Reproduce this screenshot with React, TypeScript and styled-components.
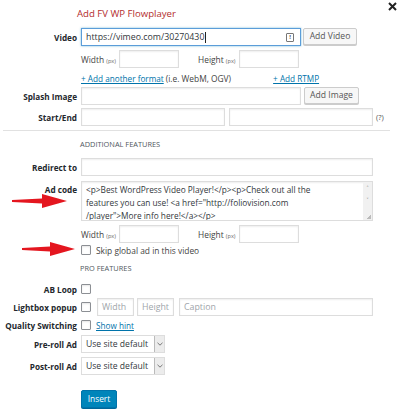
import React from 'react'
import styled, { createGlobalStyle } from 'styled-components'

const Global = createGlobalStyle`
    html, body {
        margin: 0;
        padding: 0;
        background: #fff;
    }
    body {
        font-family: "Open Sans", "Noto Sans", sans-serif;
        color: #444;
    }
`

const Dialog = styled.div`
    position: relative;
    width: 400px;
    height: 414px;
    background: #fff;
    overflow: hidden;
`

const Close = styled.button`
    position: absolute;
    top: 1px;
    right: 2px;
    width: 10px;
    height: 10px;
    padding: 0;
    border: 0;
    background: none;
    >svg{
        display: block;
    }
`

const Title = styled.h2`
    margin: 0;
    height: 28px;
    line-height: 28px;
    padding-left: 77px;
    font-size: 9.6px;
    font-weight: 400;
    color: #b32d2e;
`

const Row = styled.div<{ $top?: number, $h?: number }>`
    display: flex;
    align-items: center;
    margin-top: ${p => p.$top || 0}px;
    height: ${p => p.$h || 18}px;
    position: relative;
`

const Label = styled.div<{ $top?: boolean }>`
    width: 81px;
    flex-shrink: 0;
    box-sizing: border-box;
    padding-right: 4px;
    text-align: right;
    white-space: nowrap;
    font-size: 8.2px;
    font-weight: 700;
    color: #23282d;
    align-self: ${p => p.$top ? 'flex-start' : 'center'};
    padding-top: ${p => p.$top ? '3px' : '0'};
`

const Field = styled.div<{ $w: number, $ml?: number, $focus?: boolean, $h?: number }>`
    box-sizing: border-box;
    width: ${p => p.$w}px;
    height: ${p => p.$h || 18}px;
    margin-left: ${p => p.$ml || 0}px;
    border: 1px solid ${p => p.$focus ? '#5b9dd9' : '#ddd'};
    box-shadow: ${p => p.$focus ? '0 0 2px rgba(30,140,190,.6)' : 'inset 0 1px 2px rgba(0,0,0,.07)'};
    background: #fff;
    display: flex;
    align-items: center;
    padding: 0 4px;
    font-size: 8.8px;
    color: #32373c;
    white-space: nowrap;
    position: relative;
`

const Placeholder = styled.span`
    color: #a0a5aa;
`

const Caret = styled.span`
    display: inline-block;
    width: 1px;
    height: 11px;
    background: #222;
    margin-left: 1px;
`

const WarnIcon = styled.span`
    position: absolute;
    right: 6px;
    top: 4px;
    width: 6px;
    height: 7px;
    border: 1px solid #777;
    border-radius: 1px;
    font-size: 6px;
    line-height: 7px;
    text-align: center;
    font-weight: 700;
    color: #555;
`

const Button = styled.div<{ $w: number, $ml?: number }>`
    box-sizing: border-box;
    width: ${p => p.$w}px;
    height: 17px;
    margin-left: ${p => p.$ml || 0}px;
    border: 1px solid #ccc;
    border-radius: 2px;
    background: #f7f7f7;
    box-shadow: 0 1px 0 #ccc;
    font-size: 8.6px;
    line-height: 15px;
    text-align: center;
    color: #555;
    align-self: flex-start;
`

const Primary = styled.div`
    box-sizing: border-box;
    width: 36px;
    height: 18px;
    border: 1px solid #0073aa;
    border-radius: 2px;
    background: #0085ba;
    box-shadow: 0 1px 0 #006799;
    color: #fff;
    font-size: 8.4px;
    line-height: 16px;
    text-align: center;
`

const Small = styled.span<{ $w?: number, $ml?: number }>`
    display: inline-block;
    width: ${p => p.$w ? p.$w + 'px' : 'auto'};
    margin-left: ${p => p.$ml || 0}px;
    font-size: 8.4px;
    color: #444;
    white-space: nowrap;
    >small{
        font-size: 5.6px;
        color: #666;
    }
`

const Link = styled.a<{ $ml?: number }>`
    margin-left: ${p => p.$ml || 0}px;
    color: #0073aa;
    text-decoration: underline;
    font-size: 8.2px;
    white-space: nowrap;
`

const Hint = styled.span`
    margin-left: 3px;
    font-size: 7.6px;
    color: #555;
`

const Separator = styled.hr`
    margin: 4px 10px 0 3px;
    border: 0;
    border-top: 1px solid #e1e1e1;
    height: 0;
`

const Section = styled.div<{ $top: number }>`
    margin-top: ${p => p.$top}px;
    padding-left: 80px;
    height: 12px;
    line-height: 12px;
    font-size: 7.4px;
    text-transform: uppercase;
    color: #50575e;
`

const AreaBox = styled.div`
    box-sizing: border-box;
    width: 292px;
    height: 40px;
    border: 1px solid #ddd;
    box-shadow: inset 0 1px 2px rgba(0,0,0,.07);
    display: flex;
    background: #fff;
`

const AreaText = styled.div`
    flex: 1;
    padding: 1px 4px;
    font-size: 8.3px;
    line-height: 13px;
    color: #32373c;
    white-space: pre;
    overflow: hidden;
`

const ScrollCol = styled.div`
    width: 9px;
    background: #f1f1f1;
    position: relative;
    display: flex;
    flex-direction: column;
    align-items: center;
    font-size: 6px;
    color: #555;
    >span{
        height: 12px;
        line-height: 12px;
    }
    >i{
        position: absolute;
        right: 1px;
        bottom: 1px;
        width: 4px;
        height: 4px;
        background: linear-gradient(135deg, transparent 50%, #bbb 50%);
    }
`

const Check = styled.span`
    box-sizing: border-box;
    display: inline-block;
    width: 10px;
    height: 10px;
    border: 1px solid #8c8f94;
    border-radius: 1px;
    background: #fff;
    box-shadow: inset 0 1px 2px rgba(0,0,0,.1);
    flex-shrink: 0;
`

const CheckText = styled.span`
    margin-left: 5px;
    font-size: 8.4px;
    color: #444;
`

const Select = styled.div`
    box-sizing: border-box;
    width: 84px;
    height: 18px;
    border: 1px solid #ddd;
    display: flex;
    background: #fff;
    >span{
        flex: 1;
        padding-left: 4px;
        font-size: 8.6px;
        line-height: 16px;
        color: #32373c;
        white-space: nowrap;
    }
    >b{
        width: 9px;
        border-left: 1px solid #bbb;
        background: #ececec;
        display: flex;
        align-items: center;
        justify-content: center;
    }
`

const Arrow = styled.svg<{ $left: number, $top: number }>`
    position: absolute;
    left: ${p => p.$left}px;
    top: ${p => p.$top}px;
`

function RedArrow(props: { left: number, top: number, w: number }) {
    const w = props.w
    const head = w - 25
    return (
        <Arrow $left={props.left} $top={props.top} width={w} height={16} viewBox={`0 0 ${w} 16`}>
            <polygon points={`0,7 ${head},5.5 ${head},1 ${w},8 ${head},15 ${head},10.5 0,9`} fill="#e4161f" />
        </Arrow>
    )
}

const Chevron = () => (
    <svg width="6" height="4" viewBox="0 0 6 4">
        <path d="M0.5 0.8 L3 3.2 L5.5 0.8" fill="none" stroke="#777" strokeWidth="1" />
    </svg>
)

const App = () => {
    return (
        <Dialog>
            <Global />
            <Close>
                <svg width="9" height="9" viewBox="0 0 9 9">
                    <path d="M1 1 L8 8 M8 1 L1 8" stroke="#222" strokeWidth="2" />
                </svg>
            </Close>
            <Title>Add FV WP Flowplayer</Title>

            <Row>
                <Label>Video</Label>
                <Field $w={220} $focus>https://vimeo.com/30270430<Caret /><WarnIcon>!</WarnIcon></Field>
                <Button $w={54} $ml={2}>Add Video</Button>
            </Row>
            <Row $top={4}>
                <Label />
                <Small $w={38}>Width <small>(px)</small></Small>
                <Field $w={60} />
                <Small $w={41} $ml={19}>Height <small>(px)</small></Small>
                <Field $w={60} />
            </Row>
            <Row $top={4} $h={12}>
                <Label />
                <Link>+ Add another format</Link>
                <Small $ml={2}>(i.e. WebM, OGV)</Small>
                <Link $ml={42}>+ Add RTMP</Link>
            </Row>
            <Row $top={3}>
                <Label>Splash Image</Label>
                <Field $w={220} />
                <Button $w={55} $ml={3}>Add Image</Button>
            </Row>
            <Row $top={3}>
                <Label>Start/End</Label>
                <Field $w={144} />
                <Field $w={144} $ml={4} />
                <Hint>(?)</Hint>
            </Row>
            <Separator />

            <Section $top={7}>Additional Features</Section>
            <Row $top={8}>
                <Label>Redirect to</Label>
                <Field $w={292} />
            </Row>
            <Row $top={5} $h={40}>
                <RedArrow left={12} top={12} w={55} />
                <Label $top>Ad code</Label>
                <AreaBox>
                    <AreaText>{'<p>Best WordPress Video Player!</p><p>Check out all the\nfeatures you can use! <a href="http://foliovision.com\n/player">More info here!</a></p>'}</AreaText>
                    <ScrollCol>
                        <span>&#x2c4;</span>
                        <span>&#x2c5;</span>
                        <i />
                    </ScrollCol>
                </AreaBox>
            </Row>
            <Row $top={4}>
                <Label />
                <Small $w={38}>Width <small>(px)</small></Small>
                <Field $w={60} />
                <Small $w={41} $ml={19}>Height <small>(px)</small></Small>
                <Field $w={60} />
            </Row>
            <Row $top={1} $h={12}>
                <RedArrow left={22} top={-3} w={53} />
                <Label />
                <Check />
                <CheckText>Skip global ad in this video</CheckText>
            </Row>

            <Section $top={6}>Pro Features</Section>
            <Row $top={8} $h={14}>
                <Label>AB Loop</Label>
                <Check />
            </Row>
            <Row $top={2}>
                <Label>Lightbox popup</Label>
                <Check />
                <Field $w={37} $ml={6}><Placeholder>Width</Placeholder></Field>
                <Field $w={37} $ml={3}><Placeholder>Height</Placeholder></Field>
                <Field $w={194} $ml={5}><Placeholder>Caption</Placeholder></Field>
            </Row>
            <Row $top={2} $h={14}>
                <Label>Quality Switching</Label>
                <Check />
                <Link $ml={5}>Show hint</Link>
            </Row>
            <Row $top={3}>
                <Label>Pre-roll Ad</Label>
                <Select><span>Use site default</span><b><Chevron /></b></Select>
            </Row>
            <Row $top={4}>
                <Label>Post-roll Ad</Label>
                <Select><span>Use site default</span><b><Chevron /></b></Select>
            </Row>
            <Row $top={15}>
                <Label />
                <Primary>Insert</Primary>
            </Row>
        </Dialog>
    )
}

export default App
